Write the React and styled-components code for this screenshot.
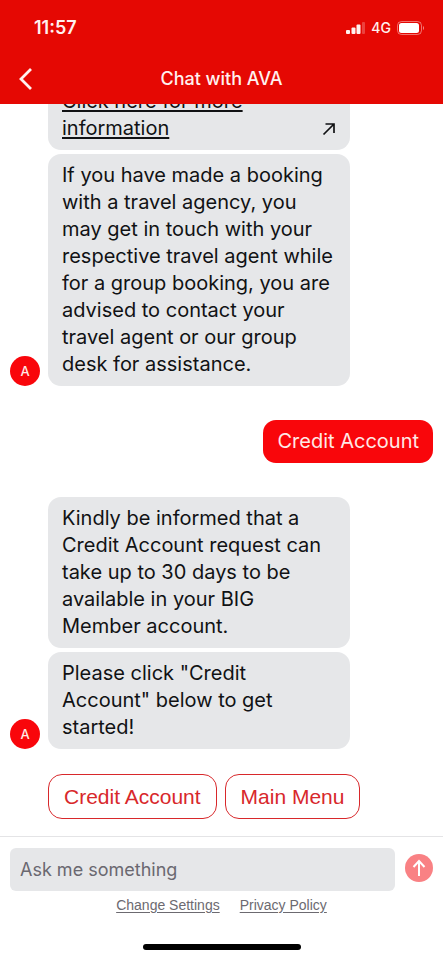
import React from "react";
import styled, { createGlobalStyle } from "styled-components";

const GlobalStyle = createGlobalStyle`
  *, *::before, *::after { box-sizing: border-box; }
  body {
    margin: 0;
    background: #fff;
    color: #111214;
    font-family: Inter, Roboto, "Liberation Sans", sans-serif;
  }
  button, input { font: inherit; }
`;

const Screen = styled.div`
  display: flex;
  flex-direction: column;
  height: 100vh;
  background: #fff;
`;

const Header = styled.header`
  flex: none;
  background: #e50803;
  color: #fff1ef;
`;

const StatusBar = styled.div`
  display: flex;
  align-items: center;
  justify-content: space-between;
  height: 56px;
  padding: 0 18px 0 34px;
`;

const Clock = styled.time`
  font-size: 18px;
  line-height: 20px;
  font-weight: 600;
`;

const StatusIcons = styled.div`
  display: flex;
  align-items: center;
  gap: 6px;
  font-size: 14px;
  line-height: 16px;
  font-weight: 500;
`;

const TitleBar = styled.div`
  display: grid;
  grid-template-columns: 44px 1fr 44px;
  align-items: center;
  height: 48px;
  padding-bottom: 2px;
`;

const BackButton = styled.button`
  display: flex;
  align-items: center;
  justify-content: flex-end;
  height: 44px;
  padding: 0 10px 0 0;
  border: 0;
  background: none;
  color: inherit;
`;

const Title = styled.h1`
  margin: 0;
  text-align: center;
  font-size: 18px;
  line-height: 24px;
  font-weight: 500;
`;

const Conversation = styled.main`
  flex: 1;
  min-height: 0;
  overflow: hidden;
  display: flex;
  flex-direction: column;
  justify-content: flex-end;
  gap: 34px;
  padding: 0 10px 17px;
`;

const BotTurn = styled.section`
  display: grid;
  grid-template-columns: 30px 1fr;
  column-gap: 8px;
  align-items: end;
`;

const Avatar = styled.span`
  display: flex;
  align-items: center;
  justify-content: center;
  width: 30px;
  height: 30px;
  border-radius: 50%;
  background: #f9060b;
  color: #ffe9e6;
  font-size: 13px;
  font-weight: 500;
`;

const BubbleStack = styled.div`
  display: flex;
  flex-direction: column;
  align-items: flex-start;
  gap: 4px;
`;

const Bubble = styled.p`
  margin: 0;
  padding: 8px 14px;
  border-radius: 13px;
  font-size: 20px;
  line-height: 27px;
  width: ${(p) => (p.$own ? "auto" : "78.4%")};
  align-self: ${(p) => (p.$own ? "flex-end" : "flex-start")};
  background: ${(p) => (p.$own ? "#f9060b" : "#e6e7e9")};
  color: ${(p) => (p.$own ? "#ffe9e6" : "inherit")};
`;

const BubbleLink = styled.a`
  display: flex;
  align-items: flex-end;
  justify-content: space-between;
  color: inherit;
  text-decoration: none;

  span {
    max-width: 200px;
    text-decoration: underline;
    text-decoration-thickness: 2px;
    text-underline-offset: 2px;
  }
  svg { margin-bottom: 6px; }
`;

const Replies = styled.div`
  grid-column: 2;
  display: flex;
  flex-wrap: wrap;
  gap: 8px;
  margin-top: 25px;
`;

const Reply = styled.button`
  height: 45px;
  padding: 0 15px;
  border: 1px solid #d8282b;
  border-radius: 14px;
  background: #fff;
  color: #d8282b;
  font-family: "Liberation Sans", Arial, sans-serif;
  font-size: 21px;
  line-height: 27px;
`;

const Footer = styled.footer`
  flex: none;
  border-top: 1px solid #e4e4e6;
  padding: 11px 10px 10px;
`;

const Composer = styled.form`
  display: flex;
  align-items: center;
  gap: 10px;
`;

const Field = styled.input`
  flex: 1;
  min-width: 0;
  height: 43px;
  padding: 0 10px;
  border: 0;
  border-radius: 6px;
  background: #e6e7e9;
  color: #111214;
  font-size: 18px;

  &::placeholder { color: #6a6870; opacity: 1; }
`;

const SendButton = styled.button`
  display: flex;
  align-items: center;
  justify-content: center;
  width: 28px;
  height: 28px;
  margin-bottom: 4px;
  padding: 0;
  border: 0;
  border-radius: 50%;
  background: #f98184;
  color: #fff;
`;

const FooterLinks = styled.nav`
  display: flex;
  justify-content: center;
  gap: 20px;
  margin-top: 5px;

  a {
    color: #6c6a70;
    font-family: "Liberation Sans", Arial, sans-serif;
    font-size: 14px;
    line-height: 18px;
    text-underline-offset: 2px;
  }
`;

const HomeIndicator = styled.div`
  width: 158px;
  height: 6px;
  margin: 30px auto 0;
  border-radius: 3px;
  background: #000;
`;

const SignalIcon = () => (
  <svg width="20" height="12" viewBox="0 0 20 12" fill="currentColor" aria-hidden="true">
    <rect x="1" y="8" width="4" height="4" rx="1" />
    <rect x="6.500" y="5.500" width="4" height="6.500" rx="1" />
    <rect x="11.500" y="2.500" width="4" height="9.500" rx="1" />
    <rect x="17" y="0" width="3" height="12" rx="1" opacity="0.25" />
  </svg>
);

const BatteryIcon = () => (
  <svg width="28" height="14" viewBox="0 0 28 14" fill="none" aria-hidden="true">
    <rect x="0.5" y="0.5" width="24" height="13" rx="4" stroke="currentColor" opacity="0.45" />
    <rect x="2" y="2" width="20" height="10" rx="2.5" fill="#fff" />
    <path d="M26 5v4c1.4-.6 1.4-3.400 0-4z" fill="currentColor" opacity="0.55" />
  </svg>
);

const BackIcon = () => (
  <svg width="16" height="24" viewBox="0 0 16 24" fill="none" aria-hidden="true">
    <path d="M13 2L3 12L13 22" stroke="currentColor" strokeWidth="2.800" />
  </svg>
);

const OutwardIcon = () => (
  <svg width="14" height="14" viewBox="0 0 14 14" fill="none" aria-hidden="true">
    <path d="M1.500 12.500L12 2M3.500 2H12v9" stroke="currentColor" strokeWidth="1.700" />
  </svg>
);

const SendIcon = () => (
  <svg width="16" height="18" viewBox="0 0 16 18" fill="none" aria-hidden="true">
    <path d="M8 17V2M2.500 8L8 2l5.500 6" stroke="currentColor" strokeWidth="2" />
  </svg>
);

export default function App() {
  return (
    <Screen>
      <GlobalStyle />
      <Header>
        <StatusBar>
          <Clock>11:57</Clock>
          <StatusIcons>
            <SignalIcon />
            <span>4G</span>
            <BatteryIcon />
          </StatusIcons>
        </StatusBar>
        <TitleBar>
          <BackButton type="button" aria-label="Back">
            <BackIcon />
          </BackButton>
          <Title>Chat with AVA</Title>
        </TitleBar>
      </Header>

      <Conversation>
        <BotTurn>
          <Avatar>A</Avatar>
          <BubbleStack>
            <Bubble>
              <BubbleLink href="#more">
                <span>Click here for more information</span>
                <OutwardIcon />
              </BubbleLink>
            </Bubble>
            <Bubble>
              If you have made a booking with a travel agency, you may get in touch with your
              respective travel agent while for a group booking, you are advised to contact your
              travel agent or our group desk for assistance.
            </Bubble>
          </BubbleStack>
        </BotTurn>

        <Bubble $own>Credit Account</Bubble>

        <BotTurn>
          <Avatar>A</Avatar>
          <BubbleStack>
            <Bubble>
              Kindly be informed that a Credit Account request can take up to 30 days to be
              available in your BIG Member account.
            </Bubble>
            <Bubble>Please click "Credit Account" below to get started!</Bubble>
          </BubbleStack>
          <Replies>
            <Reply type="button">Credit Account</Reply>
            <Reply type="button">Main Menu</Reply>
          </Replies>
        </BotTurn>
      </Conversation>

      <Footer>
        <Composer onSubmit={(e) => e.preventDefault()}>
          <Field type="text" aria-label="Message" placeholder="Ask me something" />
          <SendButton type="submit" aria-label="Send">
            <SendIcon />
          </SendButton>
        </Composer>
        <FooterLinks>
          <a href="#settings">Change Settings</a>
          <a href="#privacy">Privacy Policy</a>
        </FooterLinks>
        <HomeIndicator />
      </Footer>
    </Screen>
  );
}
